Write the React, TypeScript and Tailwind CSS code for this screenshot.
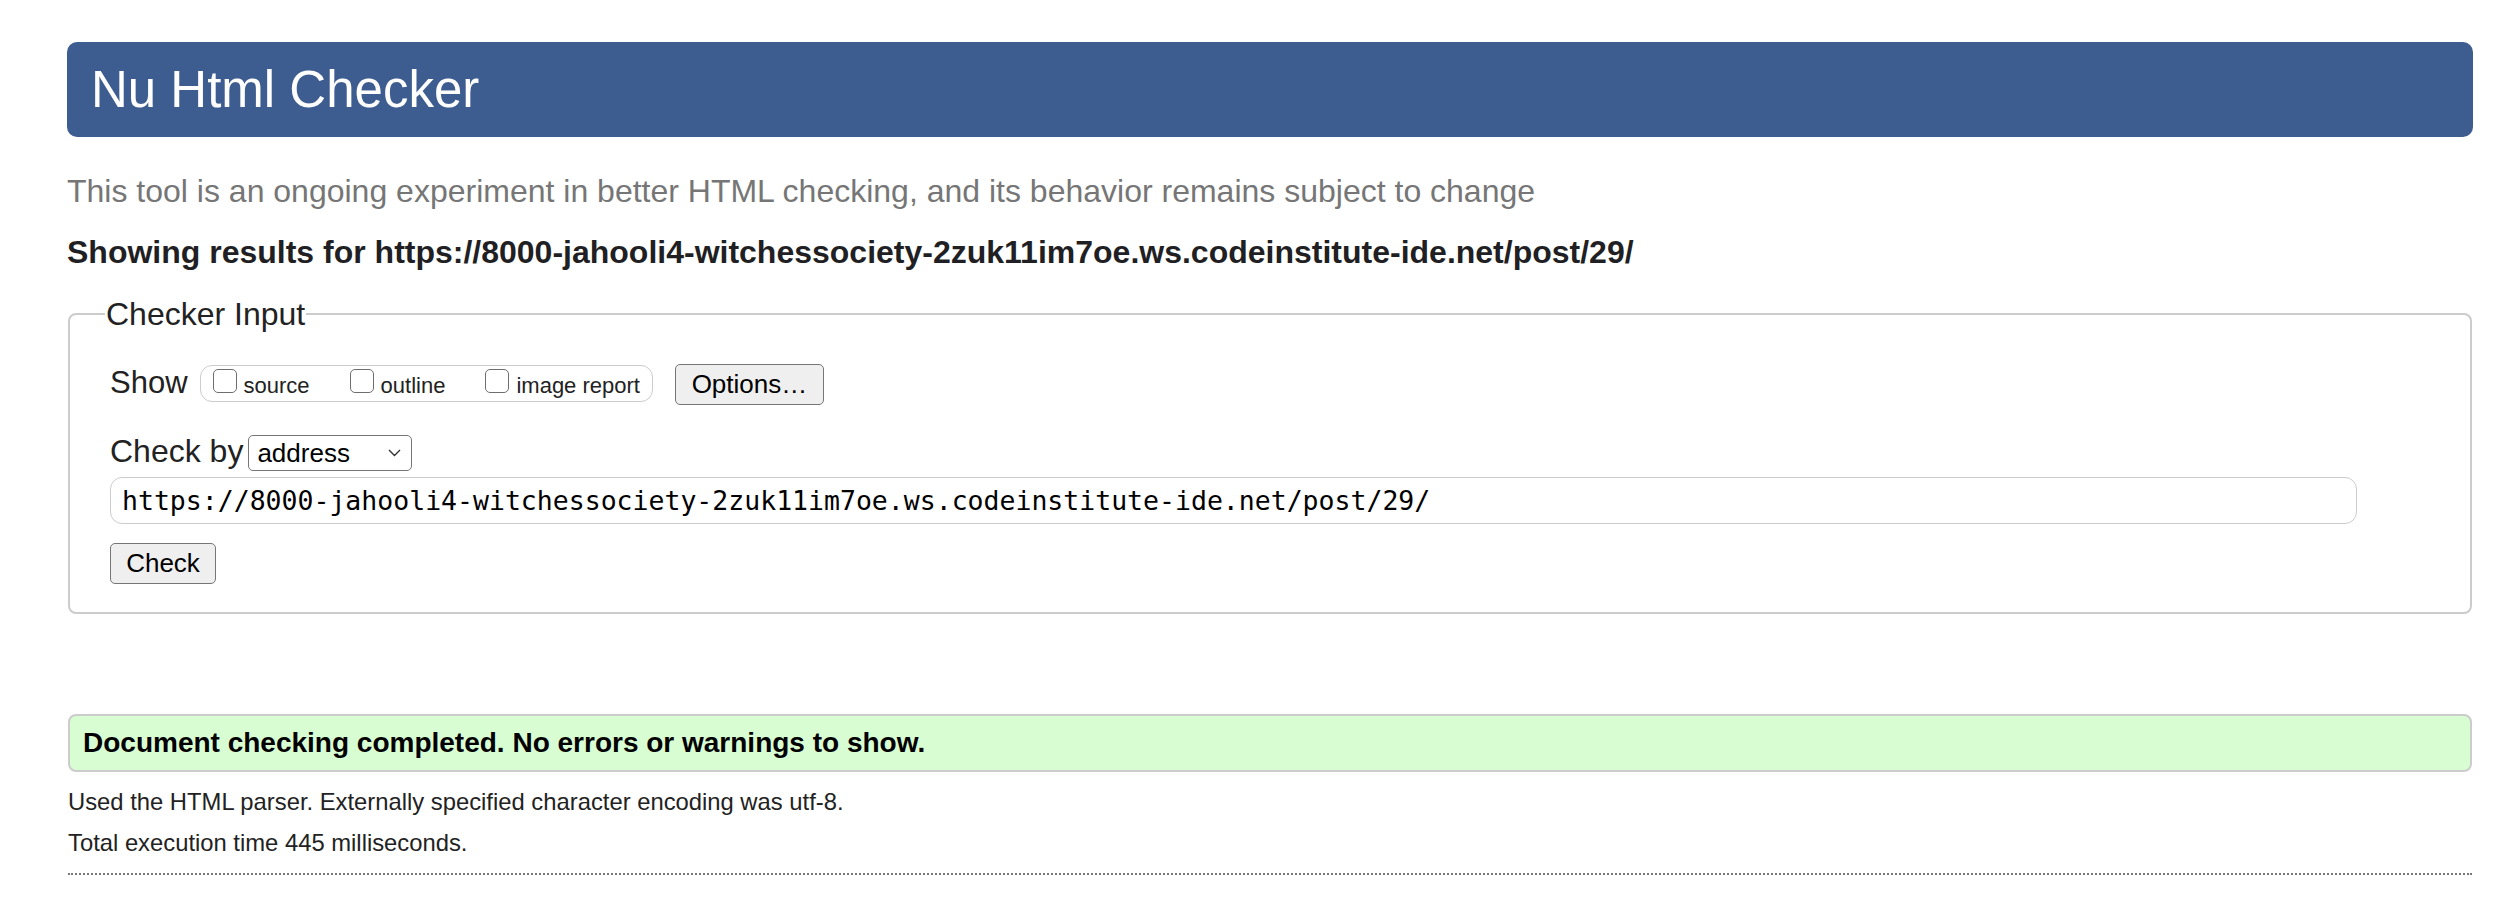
import React from 'react';

const url = 'https://8000-jahooli4-witchessociety-2zuk11im7oe.ws.codeinstitute-ide.net/post/29/';

const CheckOption: React.FC<{ label: string }> = ({ label }) => (
  <label className="flex items-baseline gap-[7px]">
    <span className="block w-[24px] h-[24px] shrink-0 rounded-[5px] border-[1.5px] border-[#6e6e6e] bg-white" />
    <span className="text-[22px] leading-[22px]">{label}</span>
  </label>
);

const App: React.FC = () => {
  return (
    <div
      className="min-h-[918px] bg-white pt-[42px] text-[#222]"
      style={{ fontFamily: '"Liberation Sans", Arial, Helvetica, sans-serif' }}
    >
      <div className="ml-[67px] w-[2406px] flex flex-col">
        <header className="h-[95px] rounded-[10px] bg-[#3d5c8f] flex items-center pl-[24px]">
          <h1 className="text-white text-[51px] leading-[51px] font-normal">Nu Html Checker</h1>
        </header>

        <p className="mt-[38px] text-[32px] leading-[32px] text-[#767676]">
          This tool is an ongoing experiment in better HTML checking, and its behavior remains subject to change
        </p>

        <p className="mt-[29px] text-[32px] leading-[32px] font-bold text-[#1f1f24]">
          Showing results for {url}
        </p>

        <fieldset className="mt-[30px] ml-px w-[2404px] border-2 border-[#cccccc] rounded-[8px] pl-[40px] pr-[20px] pb-[28px] pt-[34px]">
          <legend className="-ml-[5px] px-[1px] text-[32px] leading-[32px]">Checker Input</legend>

          <div className="flex items-baseline">
            <span className="text-[31px] leading-[30px]">Show</span>
            <div className="ml-[12px] h-[37px] flex items-center gap-[40px] pl-[12px] pr-[12px] border-[1.5px] border-[#cccccc] rounded-[12px]">
              <CheckOption label="source" />
              <CheckOption label="outline" />
              <CheckOption label="image report" />
            </div>
            <div className="ml-[22px] w-[149px] h-[41px] flex items-center justify-center bg-[#efefef] border-[1.5px] border-[#767676] rounded-[5px] text-[26px] text-black">
              Options…
            </div>
          </div>

          <div className="mt-[30px] flex items-baseline">
            <span className="text-[32px] leading-[30px]">Check by</span>
            <div className="ml-[5px] w-[164px] h-[36px] flex items-center justify-between pl-[8px] pr-[10px] border-[1.5px] border-[#767676] rounded-[5px] text-[26px] text-black">
              <span>address</span>
              <svg width="13" height="8" viewBox="0 0 13 8" fill="none" className="self-center">
                <path d="M1 1l5.5 5.5L12 1" stroke="#333" strokeWidth="1.4" />
              </svg>
            </div>
          </div>

          <div
            className="mt-[6px] w-[2247px] h-[47px] flex items-center pl-[11px] border-[1.5px] border-[#cccccc] rounded-[12px] text-[26.5px] text-black"
            style={{ fontFamily: '"DejaVu Sans Mono", Menlo, monospace' }}
          >
            {url}
          </div>

          <div className="mt-[19px] w-[106px] h-[41px] flex items-center justify-center bg-[#efefef] border-[1.5px] border-[#767676] rounded-[5px] text-[26px] text-black">
            Check
          </div>
        </fieldset>

        <div className="mt-[100px] ml-px w-[2404px] h-[58px] flex items-center pl-[13px] bg-[#d8fdd3] border-2 border-[#cccccc] rounded-[8px]">
          <p className="text-[28px] font-bold text-black">Document checking completed. No errors or warnings to show.</p>
        </div>

        <p className="mt-[18px] ml-px text-[23.8px] leading-[24px]">
          Used the HTML parser. Externally specified character encoding was utf-8.
        </p>
        <p className="mt-[17px] ml-px text-[23.8px] leading-[24px]">Total execution time 445 milliseconds.</p>

        <div className="mt-[18px] ml-px w-[2404px] border-b-2 border-dotted border-[#777]" />
      </div>
    </div>
  );
};

export default App;
